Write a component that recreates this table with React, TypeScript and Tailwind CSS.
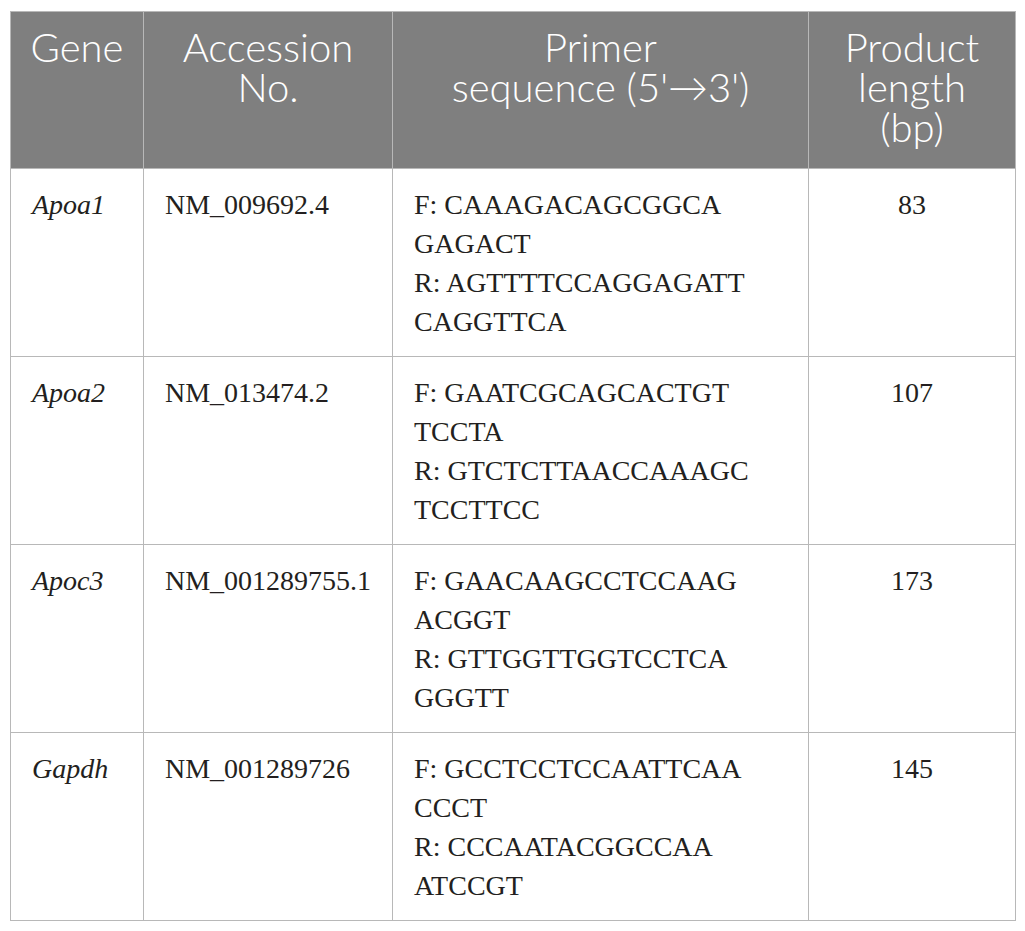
const rows = [
  {
    gene: "Apoa1",
    acc: "NM_009692.4",
    primer: ["F: CAAAGACAGCGGCA", "GAGACT", "R: AGTTTTCCAGGAGATT", "CAGGTTCA"],
    len: "83",
  },
  {
    gene: "Apoa2",
    acc: "NM_013474.2",
    primer: ["F: GAATCGCAGCACTGT", "TCCTA", "R: GTCTCTTAACCAAAGC", "TCCTTCC"],
    len: "107",
  },
  {
    gene: "Apoc3",
    acc: "NM_001289755.1",
    primer: ["F: GAACAAGCCTCCAAG", "ACGGT", "R: GTTGGTTGGTCCTCA", "GGGTT"],
    len: "173",
  },
  {
    gene: "Gapdh",
    acc: "NM_001289726",
    primer: ["F: GCCTCCTCCAATTCAA", "CCCT", "R: CCCAATACGGCCAA", "ATCCGT"],
    len: "145",
  },
];

const head = "border border-[#b8b8b8] align-top text-center px-2 pt-[15px] font-light";
const cell =
  "border border-[#b8b8b8] align-top px-[21px] pt-[16px] pb-[15px] font-[family-name:Liberation_Serif,serif] text-[28px] leading-[39px] text-[#231f20]";

export default function App() {
  return (
    <div className="min-h-screen bg-white pl-[10px] pt-[11px]">
      <table className="table-fixed border-collapse w-[1005px] border border-[#a9a9a9]">
        <colgroup>
          <col className="w-[133px]" />
          <col className="w-[249px]" />
          <col className="w-[416px]" />
          <col className="w-[207px]" />
        </colgroup>
        <thead>
          <tr className="h-[157px] bg-[#7f7f7f] text-white font-[family-name:Lato,sans-serif] text-[40px] leading-[40px]">
            <th className={head}>Gene</th>
            <th className={head}>
              Accession
              <br />
              No.
            </th>
            <th className={head}>
              Primer
              <br />
              sequence (5'→3')
            </th>
            <th className={head}>
              Product
              <br />
              length
              <br />
              (bp)
            </th>
          </tr>
        </thead>
        <tbody>
          {rows.map((r) => (
            <tr key={r.gene}>
              <td className={cell + " italic"}>{r.gene}</td>
              <td className={cell}>{r.acc}</td>
              <td className={cell}>
                {r.primer.map((line) => (
                  <div key={line}>{line}</div>
                ))}
              </td>
              <td className={cell + " text-center"}>{r.len}</td>
            </tr>
          ))}
        </tbody>
      </table>
    </div>
  );
}
